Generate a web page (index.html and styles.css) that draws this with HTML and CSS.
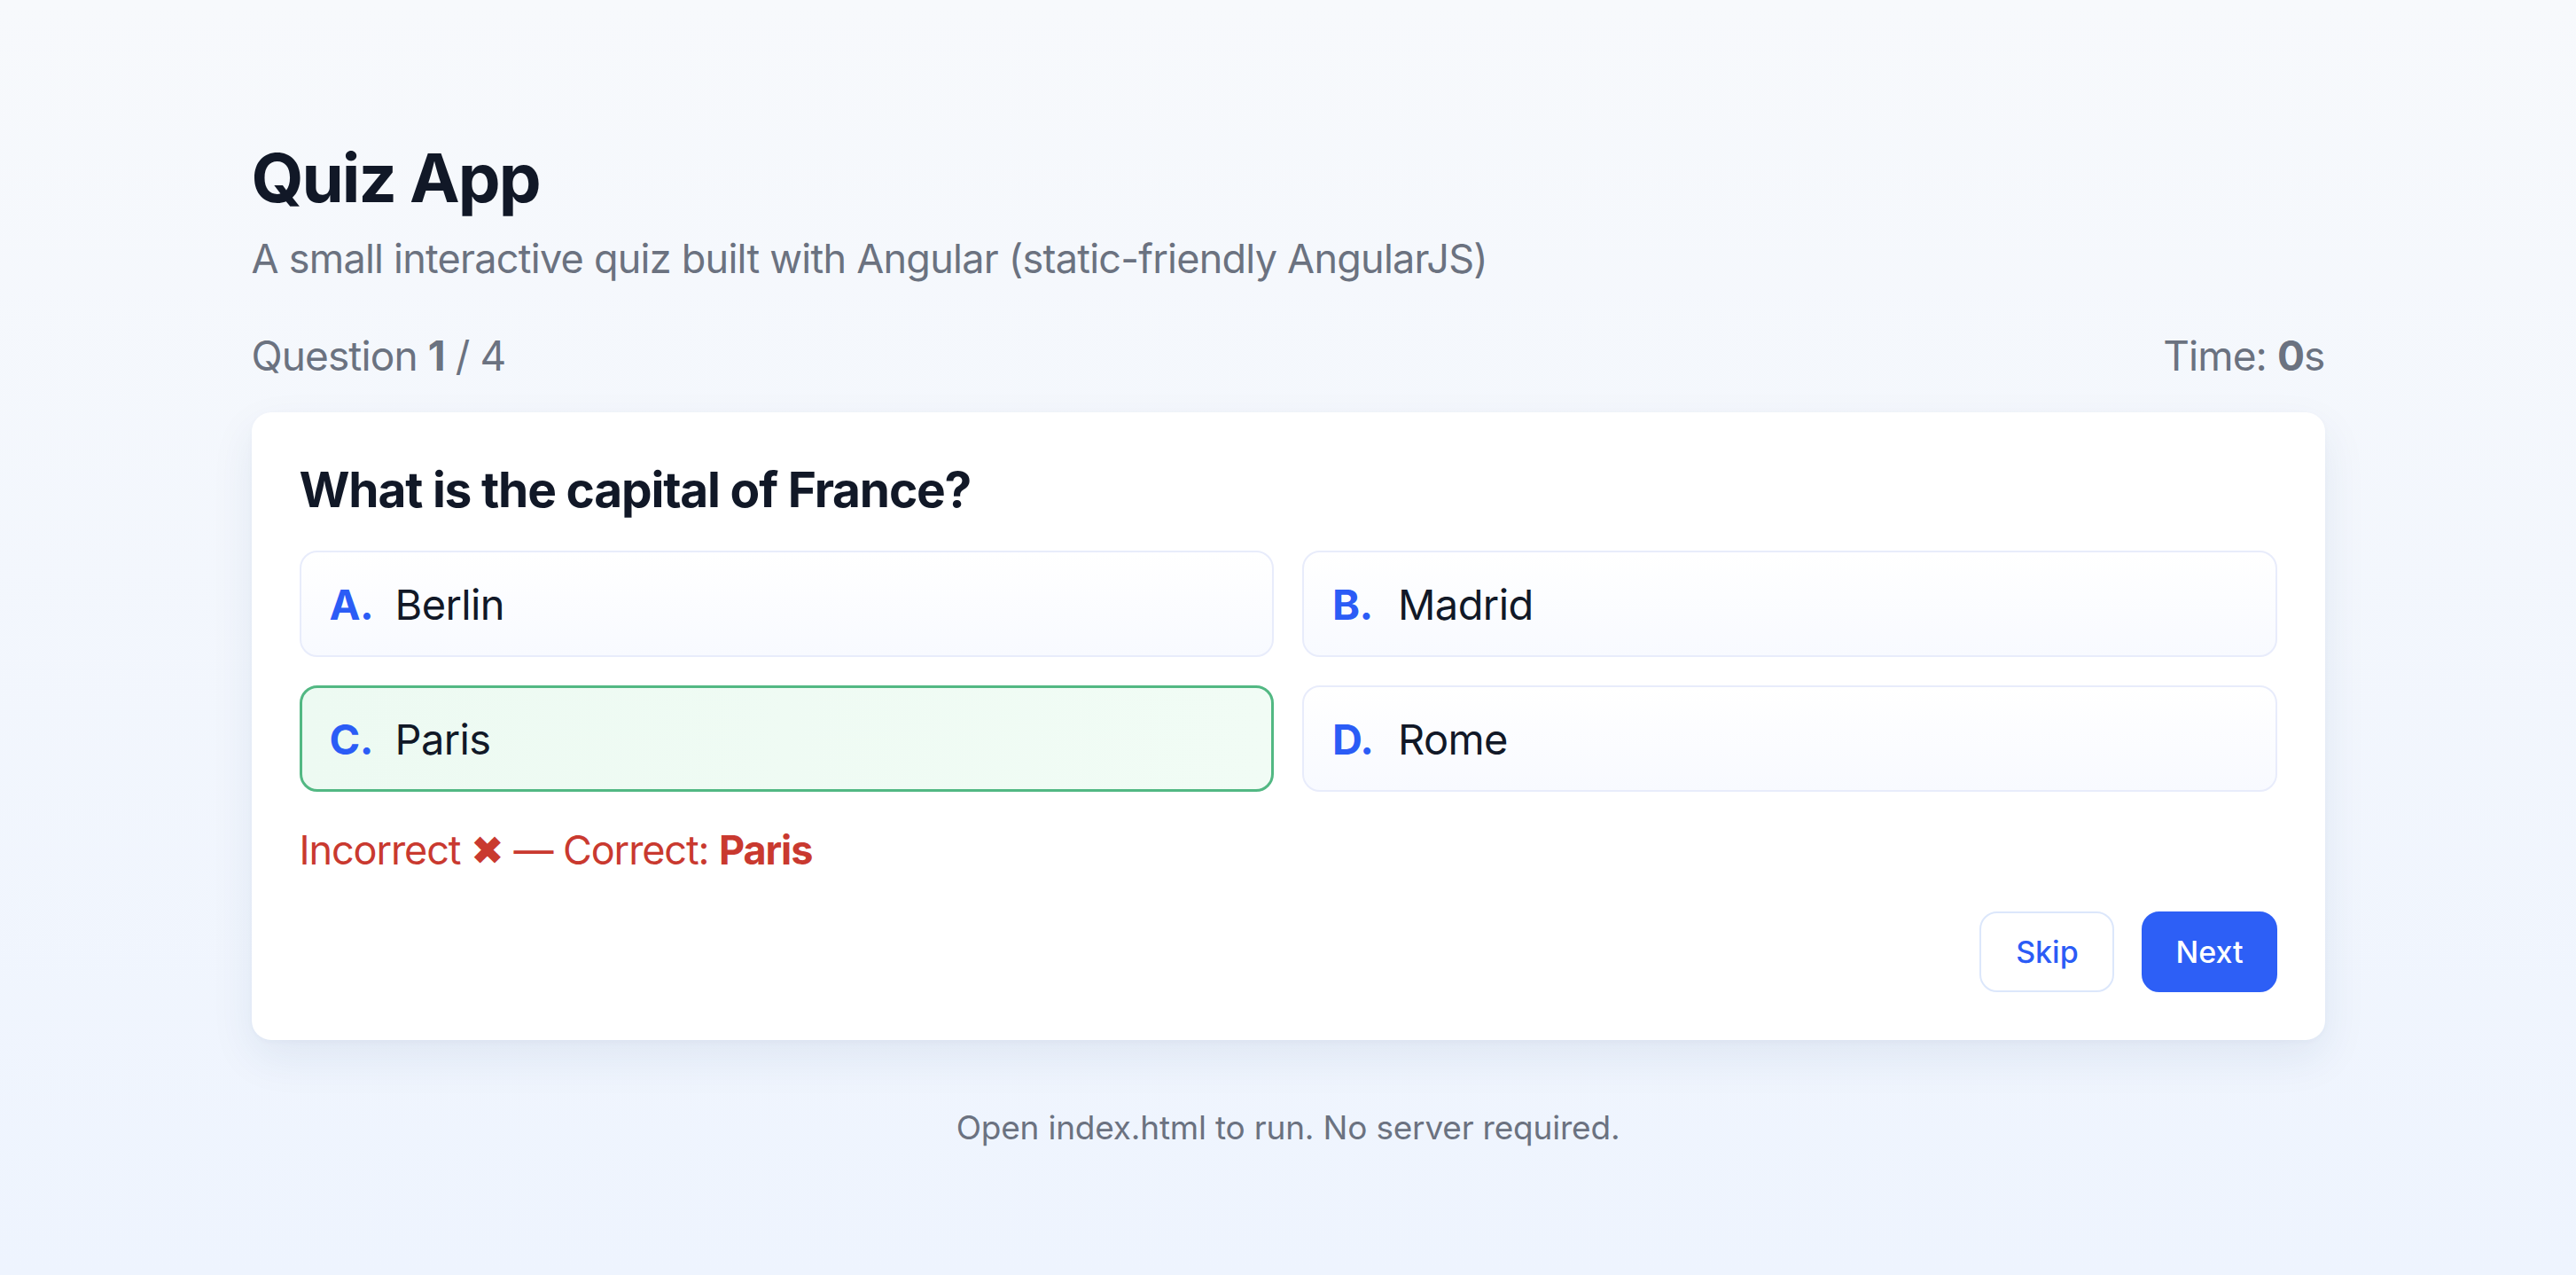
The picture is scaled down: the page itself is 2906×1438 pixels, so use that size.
FILE: index.html
```html
<!DOCTYPE html>
<html lang="en">
<head>
<meta charset="utf-8">
<title>Quiz App</title>
<link rel="stylesheet" href="styles.css">
</head>
<body>
<main class="app">
  <h1 class="title">Quiz App</h1>
  <p class="subtitle">A small interactive quiz built with Angular (static-friendly AngularJS)</p>
  <div class="meta">
    <span>Question <b>1</b> / 4</span>
    <span>Time: <b>0</b>s</span>
  </div>
  <section class="card">
    <h2 class="question">What is the capital of France?</h2>
    <div class="options">
      <button class="option"><span class="letter">A.</span><span class="text">Berlin</span></button>
      <button class="option"><span class="letter">B.</span><span class="text">Madrid</span></button>
      <button class="option correct"><span class="letter">C.</span><span class="text">Paris</span></button>
      <button class="option"><span class="letter">D.</span><span class="text">Rome</span></button>
    </div>
    <p class="feedback">Incorrect ✖ — Correct: <b>Paris</b></p>
    <div class="actions">
      <button class="btn btn-ghost">Skip</button>
      <button class="btn btn-primary">Next</button>
    </div>
  </section>
  <p class="footer">Open index.html to run. No server required.</p>
</main>
</body>
</html>
```

FILE: styles.css
```css
* { box-sizing: border-box; }

html, body {
  margin: 0;
  padding: 0;
}

body {
  min-height: 1438px;
  font-family: Inter, "Noto Sans", "Liberation Sans", sans-serif;
  background: linear-gradient(180deg, #f7f9fc 0%, #eef4fe 100%);
  color: #111827;
}

.app {
  width: 2339px;
  margin: 0 auto;
  padding-top: 155px;
}

.title {
  margin: 0;
  font-size: 76px;
  line-height: 91px;
  font-weight: 700;
  color: #111827;
  letter-spacing: -2px;
}

.subtitle {
  margin: 14px 0 0;
  font-size: 45px;
  line-height: 63px;
  color: #6b7280;
  letter-spacing: -0.75px;
}

.meta {
  margin-top: 46px;
  display: flex;
  justify-content: space-between;
  font-size: 46px;
  line-height: 64px;
  color: #6b7280;
  letter-spacing: -0.9px;
}

.meta b { font-weight: 700; }

.card {
  margin-top: 32px;
  background: #ffffff;
  border-radius: 22px;
  padding: 52px 54px 54px;
  box-shadow: 0 20px 50px rgba(30, 60, 120, 0.08), 0 2px 6px rgba(30, 60, 120, 0.03);
}

.question {
  margin: 0;
  font-size: 55px;
  line-height: 71px;
  font-weight: 700;
  color: #111827;
  letter-spacing: -1.2px;
}

.options {
  margin-top: 33px;
  display: grid;
  grid-template-columns: 1fr 1fr;
  gap: 32px;
}

.option {
  display: flex;
  align-items: center;
  height: 120px;
  padding: 0 32px;
  border: 2px solid #e8ecfb;
  border-radius: 20px;
  background: linear-gradient(180deg, #ffffff 0%, #f8faff 100%);
  font-family: inherit;
  font-size: 47px;
  color: #111827;
  text-align: left;
  letter-spacing: -0.6px;
}

.option.correct {
  border: 3px solid #52b883;
  background: linear-gradient(90deg, #edfaf2 0%, #f1fcf5 100%);
  padding: 0 31px;
}

.letter {
  width: 48px;
  margin-right: 26px;
  font-weight: 700;
  color: #2b5cf6;
}

.feedback {
  margin: 34px 0 0;
  font-size: 45px;
  line-height: 64px;
  color: #c9392f;
  letter-spacing: -1.1px;
}

.feedback b { font-weight: 700; }

.actions {
  margin-top: 37px;
  display: flex;
  justify-content: flex-end;
  gap: 31px;
}

.btn {
  height: 91px;
  min-width: 152px;
  padding: 0 36px;
  border-radius: 20px;
  font-family: inherit;
  font-size: 34px;
  font-weight: 500;
}

.btn-ghost {
  background: #ffffff;
  border: 2px solid #dce7fb;
  color: #2b5cf6;
}

.btn-primary {
  background: #2d5ff6;
  border: 2px solid #2d5ff6;
  color: #ffffff;
}

.footer {
  margin: 73px 0 0;
  text-align: center;
  font-size: 37px;
  line-height: 52px;
  color: #6b7280;
  letter-spacing: -0.2px;
}
```
